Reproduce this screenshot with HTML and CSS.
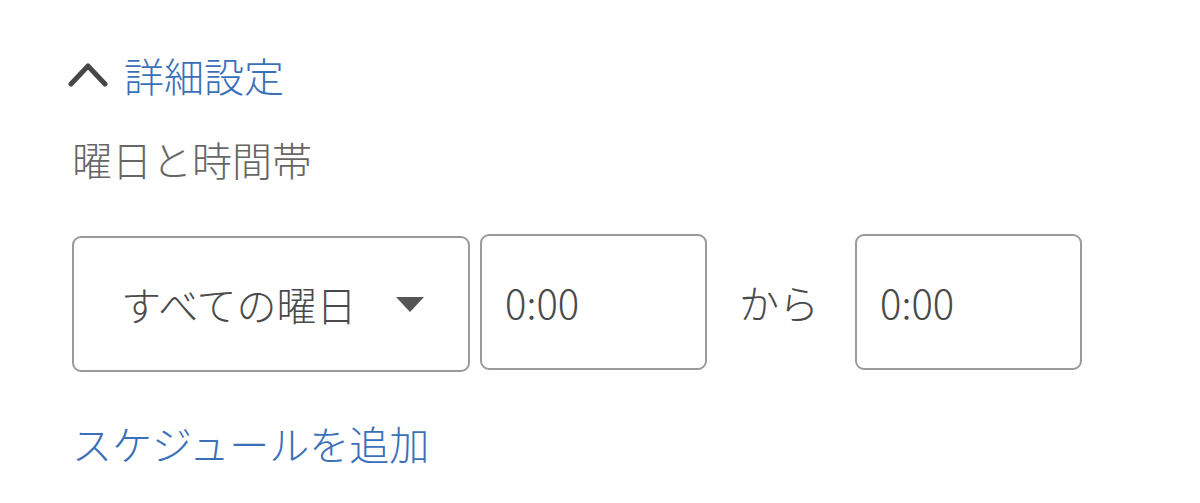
FILE: index.html
```html
<!DOCTYPE html>
<html lang="ja">
<head>
  <meta charset="UTF-8">
  <meta name="viewport" content="width=device-width, initial-scale=1.0">
  <title>詳細設定</title>
  <link rel="stylesheet" href="styles.css">
</head>
<body>

  <div class="panel">
    <button class="toggle" type="button">
      <svg class="chevron" width="40" height="30" viewBox="0 0 40 30" aria-hidden="true">
        <polyline points="3,26 20,8 37,26" fill="none" stroke="#474747" stroke-width="5" stroke-linecap="round" stroke-linejoin="round"/>
      </svg>
      <span class="toggle-text">詳細設定</span>
    </button>

    <div class="field-label">曜日と時間帯</div>

    <div class="schedule-row">
      <div class="select-box">
        <span>すべての曜日</span>
        <span class="caret"></span>
      </div>
      <div class="time-box">0:00</div>
      <span class="from">から</span>
      <div class="time-box">0:00</div>
    </div>

    <a class="add-link" href="#">スケジュールを追加</a>
  </div>

</body>
</html>
```

FILE: styles.css
```css
:root {
  --link-color: #3b6fb8;
  --text-color: #4a4a4a;
  --label-color: #666;
  --border-color: #9a9a9a;
}
body {
  margin: 0;
  background-color: #fff;
  font-family: "Noto Sans CJK JP", "Noto Sans", sans-serif;
  font-size: 40px;
  font-weight: 300;
  color: var(--text-color);
}
.panel {
  padding: 47px 0 0 72px;
}
.toggle {
  display: flex;
  align-items: center;
  height: 56px;
  margin-left: -4px;
  padding: 0;
  border: none;
  background: none;
  font: inherit;
  cursor: pointer;
}
.chevron {
  display: block;
  margin-right: 16px;
  margin-top: -4px;
}
.toggle-text {
  color: var(--link-color);
  line-height: 56px;
}
.field-label {
  margin-top: 28px;
  line-height: 56px;
  color: var(--label-color);
}
.schedule-row {
  display: flex;
  align-items: flex-start;
  margin-top: 47px;
}
.select-box {
  display: flex;
  align-items: center;
  justify-content: space-between;
  box-sizing: border-box;
  width: 398px;
  height: 136px;
  margin-top: 2px;
  padding: 0 44px 0 47px;
  border: 2px solid var(--border-color);
  border-radius: 9px;
}
.caret {
  width: 0;
  height: 0;
  border-left: 14px solid transparent;
  border-right: 14px solid transparent;
  border-top: 15px solid #555;
}
.time-box {
  display: flex;
  align-items: center;
  box-sizing: border-box;
  width: 227px;
  height: 136px;
  margin-left: 10px;
  padding-left: 23px;
  border: 2px solid var(--border-color);
  border-radius: 9px;
}
.from {
  display: flex;
  align-items: center;
  height: 136px;
  margin: 0 26px 0 32px;
}
.add-link {
  display: block;
  margin-top: 43px;
  line-height: 56px;
  color: var(--link-color);
  text-decoration: none;
}
```
